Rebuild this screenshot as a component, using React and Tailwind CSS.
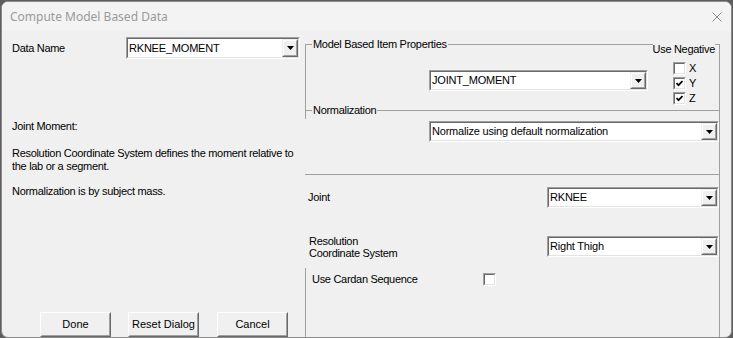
import React from "react";

const font = { fontFamily: '"Liberation Sans", Arial, sans-serif' };

const Arrow = () => (
  <div className="h-full w-[16px] border border-t-[#f0f0f0] border-l-[#f0f0f0] border-b-[#696969] border-r-[#696969]">
    <div className="h-full w-full border border-t-white border-l-white border-b-[#a0a0a0] border-r-[#a0a0a0] bg-[#f0f0f0] flex items-center justify-center">
      <svg width="7" height="4" viewBox="0 0 7 4">
        <polygon points="0,0 7,0 3.5,4" fill="#000" />
      </svg>
    </div>
  </div>
);

const Combo = ({ value, className }) => (
  <div className={`border border-t-[#a0a0a0] border-l-[#a0a0a0] border-b-white border-r-white ${className}`}>
    <div className="h-full border border-t-[#696969] border-l-[#696969] border-b-[#e3e3e3] border-r-[#e3e3e3] bg-white flex items-center">
      <span className="flex-1 pl-[1px] text-[11px] tracking-[-0.2px] text-black leading-none whitespace-nowrap">{value}</span>
      <Arrow />
    </div>
  </div>
);

const Check = ({ checked }) => (
  <div className="w-[13px] h-[13px] shrink-0 border border-t-[#a0a0a0] border-l-[#a0a0a0] border-b-white border-r-white">
    <div className="h-full w-full border border-t-[#696969] border-l-[#696969] border-b-[#e3e3e3] border-r-[#e3e3e3] bg-white flex items-center justify-center">
      {checked && (
        <svg width="7" height="7" viewBox="0 0 7 7">
          <polyline points="0.5,3 2.5,5.2 6.5,1" fill="none" stroke="#000" strokeWidth="1.7" />
        </svg>
      )}
    </div>
  </div>
);

const Button = ({ label, className }) => (
  <div className={`w-[71px] h-[25px] border border-t-white border-l-white border-b-[#696969] border-r-[#696969] ${className}`}>
    <div className="h-full w-full border border-t-[#f0f0f0] border-l-[#f0f0f0] border-b-[#a0a0a0] border-r-[#a0a0a0] bg-[#f0f0f0] flex items-center justify-center text-[11px] text-black">
      {label}
    </div>
  </div>
);

export default function App() {
  return (
    <div className="w-[733px] h-[338px] bg-[#5e5e5e] pl-[1px] pt-[1px] overflow-hidden" style={font}>
      <div className="w-[731px] h-[337px] rounded-[7px] border border-[#8c8c8c] bg-[#f0f0f0] flex flex-col overflow-hidden">
        {/* title bar */}
        <div className="h-[29px] shrink-0 bg-[#f3f3f3] flex items-center justify-between pl-[8px] pr-[9px]">
          <span className="text-[12px] text-[#9a9a9a]" style={{ fontFamily: '"Noto Sans", sans-serif' }}>
            Compute Model Based Data
          </span>
          <svg width="10" height="10" viewBox="0 0 10 10">
            <path d="M0.5 0.5 L9.5 9.5 M9.5 0.5 L0.5 9.5" stroke="#8a8a8a" strokeWidth="1" />
          </svg>
        </div>

        <div className="flex flex-1">
          {/* left panel */}
          <div className="w-[303px] flex flex-col pt-[6px] text-[11px] tracking-[-0.3px] text-black leading-[13px]">
            <div className="flex items-center h-[22px]">
              <span className="w-[124px] pl-[10px]">Data Name</span>
              <Combo value="RKNEE_MOMENT" className="w-[174px] h-[22px]" />
            </div>
            <p className="mt-[61px] pl-[10px]">Joint Moment:</p>
            <p className="mt-[14px] pl-[10px] whitespace-nowrap">
              Resolution Coordinate System defines the moment relative to
              <br />
              the lab or a segment.
            </p>
            <p className="mt-[12px] pl-[10px]">Normalization is by subject mass.</p>
            <div className="mt-auto flex tracking-normal">
              <Button label="Done" className="ml-[38px]" />
              <Button label="Reset Dialog" className="ml-[17px]" />
              <Button label="Cancel" className="ml-[18px]" />
            </div>
          </div>

          {/* right panel */}
          <div className="w-[415px] flex flex-col text-[11px] tracking-[-0.3px] text-black leading-[13px]">
            <div className="relative mt-[13px] h-[66px] border-t border-l border-r border-[#a0a0a0]">
              <span className="absolute left-[6px] -top-[7px] px-[1px] bg-[#f0f0f0]">Model Based Item Properties</span>
              <span className="absolute right-[4px] -top-[2px] bg-[#f0f0f0]">Use Negative</span>
              <div className="flex pt-[17px]">
                <Combo value="JOINT_MOMENT" className="ml-[123px] mt-[8px] w-[219px] h-[21px]" />
                <div className="ml-[25px] flex flex-col gap-[2px]">
                  {[
                    ["X", false],
                    ["Y", true],
                    ["Z", true],
                  ].map(([l, c]) => (
                    <div key={l} className="flex items-center h-[13px]">
                      <Check checked={c} />
                      <span className="ml-[3px]">{l}</span>
                    </div>
                  ))}
                </div>
              </div>
            </div>

            <div className="relative h-[65px] border-t border-r border-b border-[#a0a0a0] flex">
              <span className="absolute left-[7px] -top-[7px] px-[1px] bg-[#f0f0f0]">Normalization</span>
              <div className="w-px h-[8px] bg-[#a0a0a0]" />
              <Combo value="Normalize using default normalization" className="ml-[123px] mt-[10px] w-[290px] h-[21px]" />
            </div>

            <div className="h-[93px] border-r border-[#a0a0a0] flex flex-col">
              <div className="mt-[12px] flex items-center h-[21px]">
                <span className="w-[242px] pl-[3px]">Joint</span>
                <Combo value="RKNEE" className="w-[172px] h-[21px]" />
              </div>
              <div className="mt-[28px] flex items-center h-[21px]">
                <span className="w-[242px] pl-[4px] leading-[12px]">
                  Resolution
                  <br />
                  Coordinate System
                </span>
                <Combo value="Right Thigh" className="w-[172px] h-[21px]" />
              </div>
            </div>

            <div className="flex-1 border-l border-r border-[#a0a0a0] pt-[5px]">
              <div className="flex items-center h-[13px]">
                <span className="w-[177px] pl-[6px]">Use Cardan Sequence</span>
                <Check checked={false} />
              </div>
            </div>
          </div>
        </div>
      </div>
    </div>
  );
}
